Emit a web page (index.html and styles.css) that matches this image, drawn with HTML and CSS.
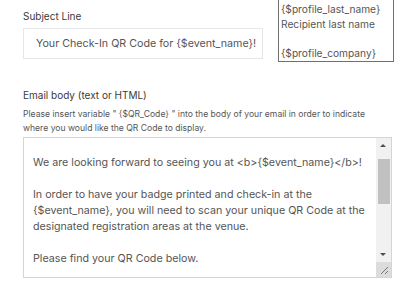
FILE: index.html
```html
<!DOCTYPE html>
<html lang="en">
<head>
    <meta charset="UTF-8">
    <meta name="viewport" content="width=device-width, initial-scale=1.0">
    <title>QR Code Email</title>
    <link rel="stylesheet" href="styles.css">
</head>
<body>
    <div class="form">
        <div class="field-label">Subject Line</div>
        <div class="input">Your Check-In QR Code for {$event_name}!</div>

        <div class="field-label body-label">Email body (text or HTML)</div>
        <p class="help">Please insert variable " {$QR_Code} " into the body of your email in order to indicate where you would like the QR Code to display.</p>

        <div class="textarea">
            <div class="textarea-text">
                <p>We are looking forward to seeing you at &lt;b&gt;{$event_name}&lt;/b&gt;!</p>
                <p>In order to have your badge printed and check-in at the<br>{$event_name}, you will need to scan your unique QR Code at the<br>designated registration areas at the venue.</p>
                <p>Please find your QR Code below.</p>
            </div>
            <div class="scrollbar">
                <div class="arrow arrow-up"></div>
                <div class="track"><div class="thumb"></div></div>
                <div class="arrow arrow-down"></div>
                <div class="resizer">
                    <svg width="14" height="14" viewBox="0 0 14 14"><path d="M12 5 L5 12 M12 9 L9 12" stroke="#777" stroke-width="1"/></svg>
                </div>
            </div>
        </div>
    </div>

    <!-- variable picker overlay -->
    <div class="variables">
        <div>{$profile_last_name}</div>
        <div>Recipient last name</div>
        <div>&nbsp;</div>
        <div>{$profile_company}</div>
    </div>
</body>
</html>
```

FILE: styles.css
```css
body {
    margin: 0;
    background: #fff;
    font-family: Inter, "Noto Sans", sans-serif;
    color: #555;
    width: 411px;
    height: 296px;
    overflow: hidden;
    position: relative;
}
.form {
    padding: 9px 0 0 23px;
    width: 369px;
}
.field-label {
    font-size: 10px;
    line-height: 14px;
    color: #3a3a3a;
}
.body-label {
    margin-top: 29px;
}
.input {
    margin-top: 5px;
    width: 240px;
    height: 31px;
    box-sizing: border-box;
    border: 1px solid #e6e6ea;
    padding-left: 12px;
    font-size: 10.7px;
    line-height: 29px;
    color: #555;
    white-space: nowrap;
}
.help {
    margin: 5px 0 0;
    font-size: 8.6px;
    line-height: 14px;
    color: #555;
}
.textarea {
    margin-top: 2px;
    height: 141px;
    box-sizing: border-box;
    border: 1px solid #d4d4dc;
    display: flex;
    overflow: hidden;
}
.textarea-text {
    flex: 1;
    padding: 17px 4px 0 9px;
    font-size: 10.7px;
    line-height: 16px;
    color: #555;
    white-space: nowrap;
}
.textarea-text p {
    margin: 0 0 16px;
}
.scrollbar {
    width: 15px;
    background: #f1f1f1;
    display: flex;
    flex-direction: column;
}
.arrow {
    height: 15px;
    position: relative;
}
.arrow::after {
    content: "";
    position: absolute;
    left: 4px;
    top: 6px;
    border-left: 3.5px solid transparent;
    border-right: 3.5px solid transparent;
}
.arrow-up::after {
    border-bottom: 3.5px solid #505050;
}
.arrow-down::after {
    border-top: 3.5px solid #505050;
}
.track {
    flex: 1;
    padding: 6px 1px 0 2px;
}
.thumb {
    height: 45px;
    background: #c1c1c1;
}
.resizer {
    height: 15px;
    background: #dcdcdc;
}
.resizer svg {
    display: block;
}
.variables {
    position: absolute;
    left: 278px;
    top: -3px;
    width: 112px;
    border: 1px solid #707070;
    background: #fff;
    padding: 4px 0 0 2px;
    font-size: 10.2px;
    line-height: 14.7px;
    color: #555;
}
```
